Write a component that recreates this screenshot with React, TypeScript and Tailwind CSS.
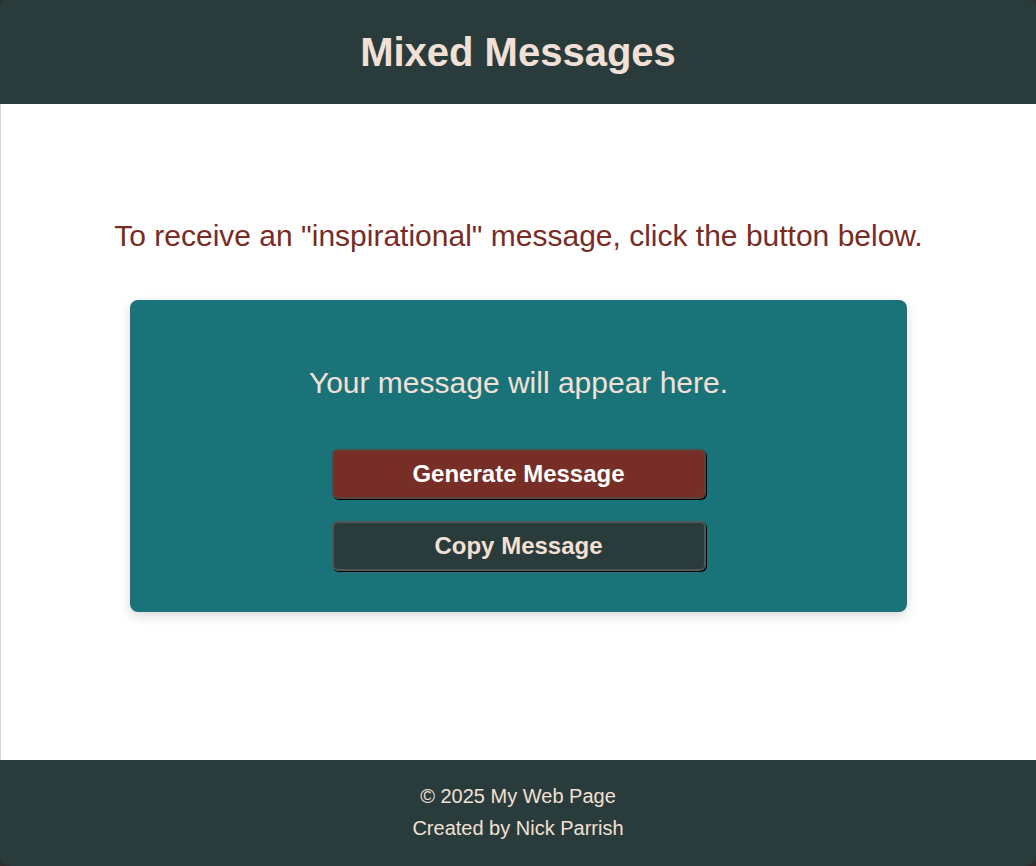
const App = () => {
  return (
    <div className="min-h-[866px] flex flex-col bg-[#2e2e2e] font-['Liberation_Sans',Arial,sans-serif]">
      <header className="h-[104px] flex items-center justify-center bg-[#293c3b] rounded-t-[6px]">
        <h1 className="text-[40px] font-bold text-[#f2e0d6] leading-none">Mixed Messages</h1>
      </header>

      <main className="flex-1 flex flex-col items-center bg-white border-l border-[#d4d4d4]">
        <p className="mt-[114px] text-[30px] leading-[36px] text-[#7a2b22]">
          To receive an "inspirational" message, click the button below.
        </p>
        <div className="mt-[46px] w-[777px] flex flex-col items-center bg-[#1a7378] rounded-lg pt-[65px] pb-[41px] shadow-[0_4px_12px_rgba(0,0,0,0.15)]">
          <p className="text-[30px] leading-[36px] text-[#f2e0d6]">Your message will appear here.</p>
          <button className="mt-[48px] w-[374px] h-[50px] rounded-md border-2 border-[#5a4440] shadow-[1px_1px_0_#000] bg-[#772e26] text-[24px] font-bold text-white">
            Generate Message
          </button>
          <button className="mt-[22px] w-[374px] h-[50px] rounded-md border-2 border-[#4f5756] shadow-[1px_1px_0_#000] bg-[#293c3b] text-[24px] font-bold text-[#f2e0d6]">
            Copy Message
          </button>
        </div>
      </main>

      <footer className="h-[106px] flex flex-col items-center justify-center pb-[2px] bg-[#293c3b] rounded-b-[10px] text-[20px] leading-[32px] text-[#f2e0d6]">
        <p>© 2025 My Web Page</p>
        <p>Created by Nick Parrish</p>
      </footer>
    </div>
  )
}

export default App
